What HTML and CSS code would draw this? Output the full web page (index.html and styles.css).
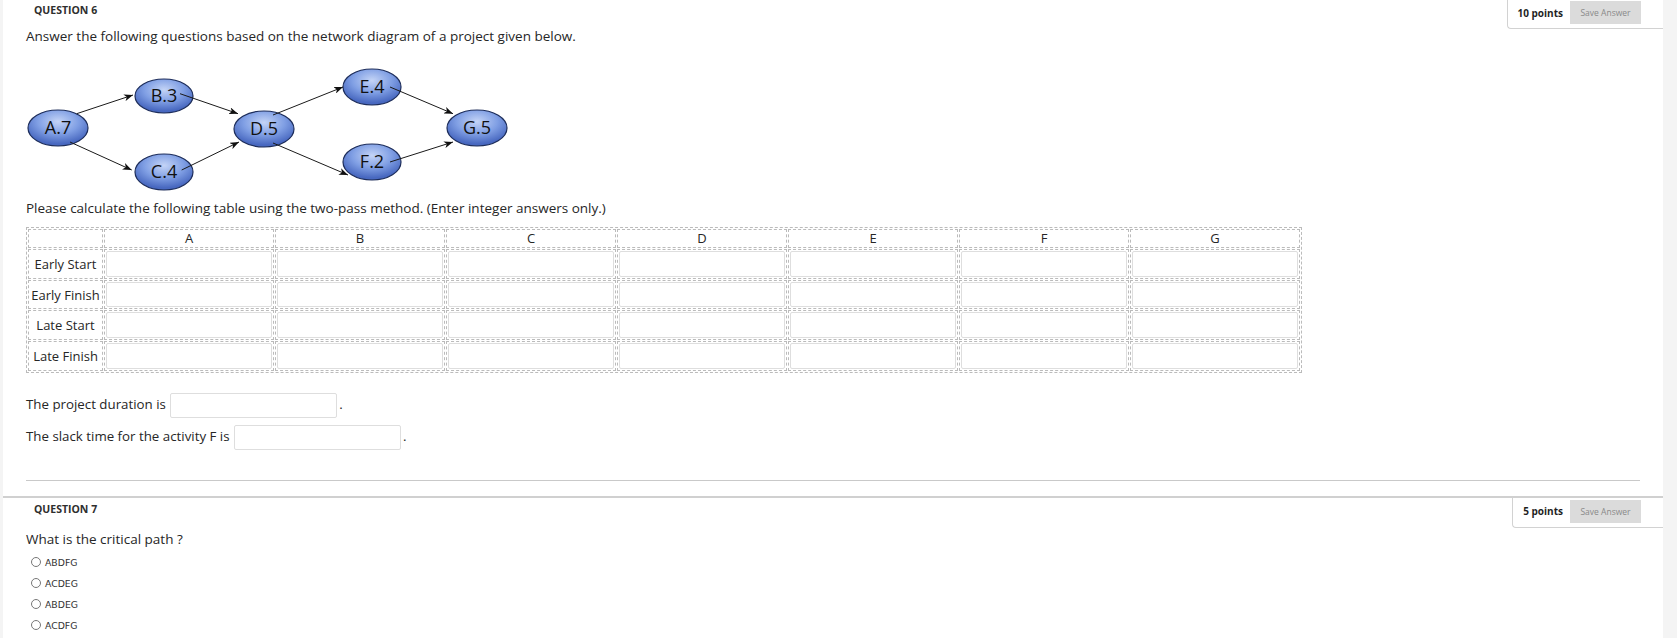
FILE: index.html
```html
<!DOCTYPE html>
<html lang="en">
<head>
  <meta charset="UTF-8">
  <title>Take Test</title>
  <link rel="stylesheet" href="styles.css">
</head>
<body>
  <div class="panel">
    <section class="question">
      <div class="q-head">
        <h3 class="q-title">QUESTION 6</h3>
        <div class="points">
          <span class="pts">10 points</span>
          <button class="save">Save Answer</button>
        </div>
      </div>
      <div class="q-body">
        <p class="lead">Answer the following questions based on the network diagram of a project given below.</p>

        <svg class="network" width="490" height="130" viewBox="0 0 490 130">
          <defs>
            <radialGradient id="node" cx="50%" cy="32%" r="62%">
              <stop offset="0%" stop-color="#c4d4f6"/>
              <stop offset="55%" stop-color="#809fe4"/>
              <stop offset="100%" stop-color="#4868c0"/>
            </radialGradient>
            <marker id="head" markerWidth="9" markerHeight="7" refX="9" refY="3.5" orient="auto" markerUnits="userSpaceOnUse">
              <path d="M0,0 L9,3.5 L0,7 L2.5,3.5 z" fill="#111"/>
            </marker>
          </defs>
          <g class="nodes">
            <ellipse cx="32" cy="64" rx="30" ry="18"/>
            <ellipse cx="138" cy="32" rx="29" ry="17"/>
            <ellipse cx="138" cy="108" rx="29" ry="18"/>
            <ellipse cx="238" cy="65" rx="30" ry="18"/>
            <ellipse cx="346" cy="23" rx="29" ry="18"/>
            <ellipse cx="346" cy="98" rx="29" ry="18"/>
            <ellipse cx="451" cy="64" rx="30" ry="18"/>
          </g>
          <g class="labels">
            <text x="32" y="70">A.7</text>
            <text x="138" y="38">B.3</text>
            <text x="138" y="114">C.4</text>
            <text x="238" y="71">D.5</text>
            <text x="346" y="29">E.4</text>
            <text x="346" y="104">F.2</text>
            <text x="451" y="70">G.5</text>
          </g>
          <g class="edges">
            <line x1="50.7" y1="49.7" x2="107" y2="31"/>
            <line x1="44" y1="78" x2="105.7" y2="106"/>
            <line x1="154" y1="29.7" x2="212" y2="49.7"/>
            <line x1="155.7" y1="106" x2="213" y2="78"/>
            <line x1="247" y1="51" x2="317" y2="23"/>
            <line x1="247" y1="79" x2="322" y2="111"/>
            <line x1="364" y1="23" x2="427" y2="49.7"/>
            <line x1="364" y1="98" x2="427" y2="78"/>
          </g>
        </svg>

        <p class="lead">Please calculate the following table using the two-pass method. (Enter integer answers only.)</p>

        <table class="cpm">
          <tr>
            <th class="corner"></th>
            <th>A</th><th>B</th><th>C</th><th>D</th><th>E</th><th>F</th><th>G</th>
          </tr>
          <tr>
            <td>Early Start</td>
            <td><input type="text"></td><td><input type="text"></td><td><input type="text"></td><td><input type="text"></td><td><input type="text"></td><td><input type="text"></td><td><input type="text"></td>
          </tr>
          <tr>
            <td>Early Finish</td>
            <td><input type="text"></td><td><input type="text"></td><td><input type="text"></td><td><input type="text"></td><td><input type="text"></td><td><input type="text"></td><td><input type="text"></td>
          </tr>
          <tr>
            <td>Late Start</td>
            <td><input type="text"></td><td><input type="text"></td><td><input type="text"></td><td><input type="text"></td><td><input type="text"></td><td><input type="text"></td><td><input type="text"></td>
          </tr>
          <tr>
            <td>Late Finish</td>
            <td><input type="text"></td><td><input type="text"></td><td><input type="text"></td><td><input type="text"></td><td><input type="text"></td><td><input type="text"></td><td><input type="text"></td>
          </tr>
        </table>

        <div class="blanks">
          <p>The project duration is <input class="blank" type="text">.</p>
          <p>The slack time for the activity F is <input class="blank" type="text">.</p>
        </div>

        <hr class="sep">
      </div>
    </section>

    <section class="question">
      <div class="q-head">
        <h3 class="q-title">QUESTION 7</h3>
        <div class="points">
          <span class="pts">5 points</span>
          <button class="save">Save Answer</button>
        </div>
      </div>
      <div class="q-body">
        <p class="lead">What is the critical path ?</p>
        <ul class="options">
          <li><label><input type="radio" name="q7"> ABDFG</label></li>
          <li><label><input type="radio" name="q7"> ACDEG</label></li>
          <li><label><input type="radio" name="q7"> ABDEG</label></li>
          <li><label><input type="radio" name="q7"> ACDFG</label></li>
        </ul>
      </div>
    </section>
  </div>
</body>
</html>
```

FILE: styles.css
```css
body, html {
  margin: 0;
  padding: 0;
  background-color: #f4f4f4;
  font-family: "Open Sans", "Liberation Sans", sans-serif;
  color: #262626;
}
.panel {
  margin: 0 14px 0 3px;
  background: #fff;
  min-height: 638px;
}
.q-head {
  display: flex;
  justify-content: space-between;
  align-items: flex-start;
}
.q-title {
  margin: 0;
  padding: 3px 0 0 31px;
  font-size: 10.5px;
  line-height: 14px;
  font-weight: 700;
  color: #2e2e2e;
}
.points {
  display: flex;
  align-items: center;
  gap: 7px;
  padding: 1px 22px 4px 10px;
  border-left: 1px solid #d2d2d2;
  border-bottom: 1px solid #d2d2d2;
  border-bottom-left-radius: 4px;
}
.pts {
  font-size: 10px;
  font-weight: 700;
  color: #1f1f1f;
}
.save {
  width: 71px;
  height: 23px;
  padding: 0;
  border: none;
  background: #dbdbdb;
  color: #8a8a8a;
  font-family: "Open Sans", sans-serif;
  font-size: 8.5px;
}
.q-body {
  padding: 0 23px;
}
.lead {
  margin: -2px 0 0;
  font-size: 13.5px;
  line-height: 18px;
}
.network {
  display: block;
  margin-top: 19px;
}
.nodes ellipse {
  fill: url(#node);
  stroke: #1d2d5a;
  stroke-width: 1.2;
}
.labels text {
  font-family: "Open Sans", sans-serif;
  font-size: 18px;
  fill: #111;
  text-anchor: middle;
}
.edges line {
  stroke: #1a1a1a;
  stroke-width: 1;
  marker-end: url(#head);
}
.network + .lead {
  margin-top: 5px;
}
.cpm {
  width: 1276px;
  margin-top: 10px;
  table-layout: fixed;
  border: 1px dashed #bbb;
  border-spacing: 1px;
}
.cpm th,
.cpm td {
  border: 1px dashed #bbb;
  padding: 1px;
  text-align: center;
  font-size: 13px;
  line-height: 16px;
  font-weight: 400;
  white-space: nowrap;
}
.cpm th {
  line-height: 15px;
}
.cpm .corner {
  width: 71px;
}
.cpm input {
  display: block;
  width: 100%;
  height: 25.7px;
  box-sizing: border-box;
  border: 1px solid #dedede;
  border-radius: 2px;
}
.blanks {
  margin-top: 15px;
}
.blanks p {
  margin: 0;
  font-size: 13.3px;
  line-height: 32.5px;
}
.blank {
  width: 167px;
  height: 25px;
  box-sizing: border-box;
  margin: 0 2px 0 1px;
  border: 1px solid #dedede;
  border-radius: 2px;
  vertical-align: middle;
}
.sep {
  margin: 27px 0 0;
  border: none;
  border-top: 1px solid #c9c9c9;
}
.question + .question {
  margin-top: 15px;
  border-top: 2px solid #d0d0d0;
}
.question + .question .points {
  padding-top: 2px;
}
.question + .question .q-title {
  padding-top: 4px;
}
.question + .question .lead {
  margin-top: 2px;
}
.options {
  list-style: none;
  margin: 4px 0 0;
  padding: 0 0 0 5px;
}
.options li {
  height: 21px;
  display: flex;
  align-items: center;
}
.options label {
  display: flex;
  align-items: center;
  font-family: "DejaVu Sans", sans-serif;
  font-size: 9.3px;
  color: #333;
}
.options input {
  appearance: none;
  width: 10px;
  height: 10px;
  margin: 0 4px 0 0;
  border: 1px solid #777;
  border-radius: 50%;
  background: #fff;
}
```
